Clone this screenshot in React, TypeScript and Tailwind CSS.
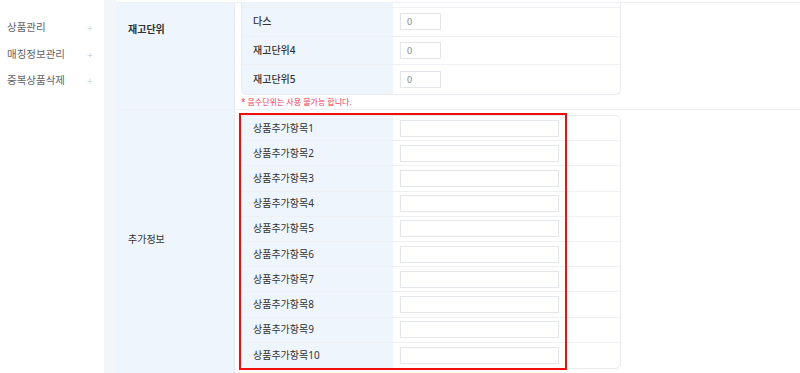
import React from "react";

const menu = ["상품관리", "매칭정보관리", "중복상품삭제"];

const stockRows = [
  { label: "다스", value: "0" },
  { label: "재고단위4", value: "0" },
  { label: "재고단위5", value: "0" },
];

const extraRows = Array.from({ length: 10 }, (_, i) => `상품추가항목${i + 1}`);

function Sidebar() {
  return (
    <aside className="w-[104px] shrink-0 bg-white pt-[15px]">
      {menu.map((m) => (
        <div
          key={m}
          className="flex h-[26.5px] items-center justify-between pl-[7px] pr-[11px] text-[10.5px] text-[#5f6368]"
        >
          <span>{m}</span>
          <span className="text-[11px] font-light text-[#c4c7cc]">+</span>
        </div>
      ))}
    </aside>
  );
}

export default function App() {
  return (
    <div
      className="flex h-[373px] w-[800px] overflow-hidden bg-[#f4f5f7]"
      style={{ fontFamily: '"Noto Sans", "Noto Sans CJK KR", sans-serif' }}
    >
      <Sidebar />

      <main className="ml-[12px] flex flex-1 flex-col bg-white pt-[2px]">
        {/* 재고단위 */}
        <div className="flex h-[108px] border-y border-[#eef0f3]">
          <div className="w-[119px] shrink-0 border-r border-[#e6ebf2] bg-[#eff5fd] pl-[12px] pt-[19px] text-[10px] font-semibold text-[#333]">
            재고단위
          </div>
          <div className="flex-1 overflow-hidden pl-[6px]">
            <div className="w-[380px] overflow-hidden rounded-b-[6px] border border-t-0 border-[#e8ebef]">
              {/* previous row, clipped by the scroll */}
              <div className="flex h-[5px] border-b border-[#eef0f3]">
                <div className="w-[151px] shrink-0 bg-[#eff5fd]" />
              </div>
              {stockRows.map((r, i) => (
                <div
                  key={r.label}
                  className={`flex h-[28.5px] ${i < stockRows.length - 1 ? "border-b border-[#eef0f3]" : ""}`}
                >
                  <div className="flex w-[151px] shrink-0 items-center bg-[#eff5fd] pl-[11px] text-[10px] font-medium text-[#333]">
                    {r.label}
                  </div>
                  <div className="flex flex-1 items-center pl-[7px]">
                    <div className="flex h-[17px] w-[41px] items-center border border-[#e3e7ec] pl-[6px] text-[9px] text-[#888]">
                      {r.value}
                    </div>
                  </div>
                </div>
              ))}
            </div>
            <p className="mt-[1px] text-[8px] text-[#ee3a5b]">* 음수단위는 사용 불가능 합니다.</p>
          </div>
        </div>

        {/* 추가정보 */}
        <div className="flex flex-1">
          <div className="flex w-[119px] shrink-0 items-center border-r border-[#e6ebf2] bg-[#eff5fd] pl-[12px] pb-[4px] text-[10px] text-[#333]">
            추가정보
          </div>
          <div className="flex-1 pl-[6px] pt-[5px]">
            <div className="relative w-[380px] rounded-[6px] border border-[#e8ebef]">
              {extraRows.map((label, i) => (
                <div
                  key={label}
                  className={`flex h-[25.2px] ${i < extraRows.length - 1 ? "border-b border-[#eef0f3]" : ""}`}
                >
                  <div
                    className={`flex w-[151px] shrink-0 items-center bg-[#eff5fd] pl-[11px] text-[10px] text-[#333] ${
                      i === 0 ? "rounded-tl-[6px]" : ""
                    } ${i === extraRows.length - 1 ? "rounded-bl-[6px]" : ""}`}
                  >
                    {label}
                  </div>
                  <div className="flex flex-1 items-center pl-[7px]">
                    <div className="h-[17px] w-[159px] border border-[#e3e7ec] bg-white" />
                  </div>
                </div>
              ))}
              <div className="pointer-events-none absolute -left-[3px] -top-[3px] -bottom-[2px] w-[328px] border-2 border-[#f20d0d]" />
            </div>
          </div>
        </div>
      </main>
    </div>
  );
}
